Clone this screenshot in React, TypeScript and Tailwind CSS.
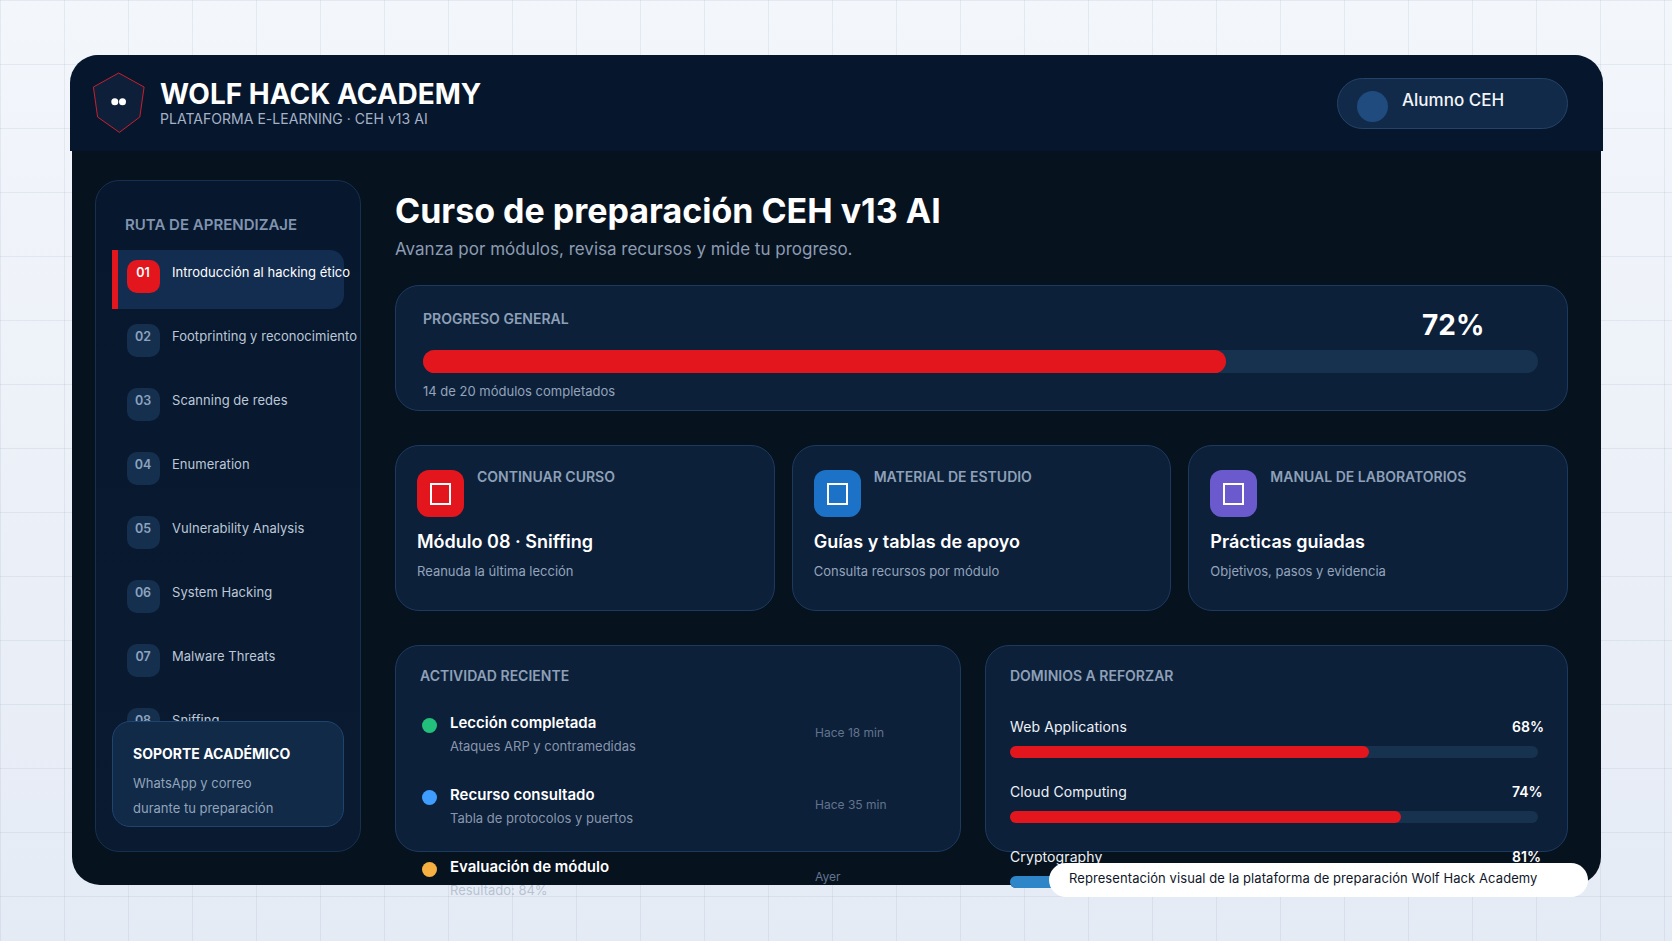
const nav = [
  ["01", "Introducción al hacking ético"],
  ["02", "Footprinting y reconocimiento"],
  ["03", "Scanning de redes"],
  ["04", "Enumeration"],
  ["05", "Vulnerability Analysis"],
  ["06", "System Hacking"],
  ["07", "Malware Threats"],
  ["08", "Sniffing"],
];

const cards = [
  { icon: "bg-[#e3161e]", label: "CONTINUAR CURSO", title: "Módulo 08 · Sniffing", sub: "Reanuda la última lección" },
  { icon: "bg-[#1c72c6]", label: "MATERIAL DE ESTUDIO", title: "Guías y tablas de apoyo", sub: "Consulta recursos por módulo" },
  { icon: "bg-[#6a5acd]", label: "MANUAL DE LABORATORIOS", title: "Prácticas guiadas", sub: "Objetivos, pasos y evidencia" },
];

const activity = [
  { dot: "bg-[#22c07a]", title: "Lección completada", sub: "Ataques ARP y contramedidas", time: "Hace 18 min" },
  { dot: "bg-[#3f9dff]", title: "Recurso consultado", sub: "Tabla de protocolos y puertos", time: "Hace 35 min" },
  { dot: "bg-[#f5b041]", title: "Evaluación de módulo", sub: "Resultado: 84%", time: "Ayer" },
];

const domains = [
  { name: "Web Applications", pct: 68, bar: "bg-[#e3161e]" },
  { name: "Cloud Computing", pct: 74, bar: "bg-[#e3161e]" },
  { name: "Cryptography", pct: 81, bar: "bg-[#2e86c9]" },
];

const grid =
  "bg-[linear-gradient(to_right,rgba(148,163,184,0.16)_1px,transparent_1px),linear-gradient(to_bottom,rgba(148,163,184,0.16)_1px,transparent_1px),linear-gradient(180deg,#f3f6fb,#e5ebf5)] bg-[size:64px_64px,64px_64px,100%_100%]";

export default function App() {
  return (
    <div className={`relative h-[941px] w-[1672px] overflow-hidden pl-[72px] pr-[71px] pt-[55px] font-['Inter',sans-serif] text-white ${grid}`}>
      <div className="h-[830px] rounded-[28px] bg-[#07121f]">
        <header className="-mx-[2px] flex h-[96px] items-center justify-between rounded-t-[28px] bg-[#06162d] pl-[23px] pr-[35px]">
          <div className="flex items-center gap-[15px]">
            <svg width="52" height="62" viewBox="0 0 52 62">
              <polygon points="25.2,0.5 50.6,14.5 46.3,44.5 25.9,59.9 4.1,44.5 -0.1,14.5" transform="translate(0.5 0.5)" fill="#0e2039" stroke="#c8202f" strokeWidth="1" />
              <circle cx="21.8" cy="29.8" r="3.5" fill="#fff" />
              <circle cx="29.5" cy="29.8" r="3.5" fill="#fff" />
            </svg>
            <div className="mt-[-2px]">
              <div className="text-[28px] font-bold leading-[32px]">WOLF HACK ACADEMY</div>
              <div className="mt-[1px] text-[14px] leading-[16px] tracking-[0.03px] text-[#a4b2c6]">PLATAFORMA E-LEARNING · CEH v13 AI</div>
            </div>
          </div>
          <div className="flex h-[51px] w-[231px] items-start gap-[14px] rounded-[26px] border border-[#234468] bg-[#112a49] pl-[19px] pt-[12px]">
            <div className="h-[31px] w-[31px] rounded-full bg-[#1f4b7e]" />
            <span className="mt-[-3px] text-[17px] font-medium leading-[24px] text-[#f1f5f9]">Alumno CEH</span>
          </div>
        </header>

        <div className="flex gap-[34px] pl-[23px] pr-[33px] pt-[29px]">
          <aside className="relative h-[672px] w-[266px] shrink-0 overflow-hidden rounded-[24px] border border-[#16304f] bg-[linear-gradient(180deg,#07172e,#0a1a30)] pl-[16px] pt-[34px]">
            <div className="pl-[13px] text-[15px] font-semibold leading-[20px] text-[#8094ae]">RUTA DE APRENDIZAJE</div>
            <div className="mt-[15px] flex flex-col gap-[5px]">
              {nav.map(([n, t], i) => (
                <div key={n} className={`flex h-[59px] w-[232px] gap-[12px] pt-[10px] ${i === 0 ? "rounded-r-[14px] border-l-[6px] border-[#e3161e] bg-[#132d50] pl-[9px]" : "pl-[15px]"}`}>
                  <div className={`flex h-[33px] w-[33px] shrink-0 justify-center rounded-[10px] pr-[1px] pt-[3px] text-[12.5px] font-semibold leading-[20px] ${i === 0 ? "bg-[#e3161e] text-white" : "bg-[#15304f] text-[#8ea3bf]"}`}>{n}</div>
                  <div className={`mt-[2px] whitespace-nowrap text-[13px] leading-[20px] tracking-[0.04px] ${i === 0 ? "text-white" : "text-[#bcc8d8]"}`}>{t}</div>
                </div>
              ))}
            </div>
            <div className="absolute left-[16px] top-[540px] h-[106px] w-[232px] rounded-[18px] border border-[#1e4570] bg-[#102a47] pl-[20px] pt-[22px]">
              <div className="text-[14px] font-bold leading-[20px] text-white">SOPORTE ACADÉMICO</div>
              <div className="mt-[7px] text-[13px] leading-[25px] text-[#93a4bb]">WhatsApp y correo<br />durante tu preparación</div>
            </div>
          </aside>

          <main className="min-w-0 flex-1 pt-[9px]">
            <h1 className="text-[34px] font-bold leading-[44px]">Curso de preparación CEH v13 AI</h1>
            <p className="mt-[3px] text-[17px] leading-[26px] text-[#8c9cb2]">Avanza por módulos, revisa recursos y mide tu progreso.</p>

            <section className="relative mt-[23px] h-[126px] rounded-[24px] border border-[#1c3a5e] bg-[#0d203a] pl-[27px] pr-[29px] pt-[23px]">
              <div className="text-[14px] font-semibold leading-[20px] text-[#8ea0b8]">PROGRESO GENERAL</div>
              <div className="absolute left-[1026px] top-[19px] text-[28px] font-bold leading-[40px]">72%</div>
              <div className="mt-[21px] h-[23px] rounded-full bg-[#17324f]">
                <div className="h-full w-[72%] rounded-full bg-[#e3161e]" />
              </div>
              <div className="mt-[8px] text-[13px] leading-[20px] text-[#93a4bb]">14 de 20 módulos completados</div>
            </section>

            <section className="mt-[34px] grid grid-cols-3 gap-[17px]">
              {cards.map((c) => (
                <div key={c.label} className="h-[166px] rounded-[24px] border border-[#1c3a5e] bg-[#0d203a] px-[21px] pt-[24px]">
                  <div className="flex gap-[13px]">
                    <div className={`flex h-[47px] w-[47px] items-center justify-center rounded-[12px] ${c.icon}`}>
                      <div className="h-[22px] w-[21px] border-2 border-white" />
                    </div>
                    <div className="mt-[-3px] text-[14px] font-semibold leading-[20px] text-[#8ea0b8]">{c.label}</div>
                  </div>
                  <div className="mt-[11px] text-[18px] font-semibold leading-[28px]">{c.title}</div>
                  <div className="mt-[5px] text-[13px] leading-[20px] text-[#93a4bb]">{c.sub}</div>
                </div>
              ))}
            </section>

            <section className="mt-[34px] flex gap-[24px]">
              <div className="h-[207px] w-[566px] rounded-[24px] border border-[#1c3a5e] bg-[#0d203a] pl-[24px] pt-[20px]">
                <div className="text-[14px] font-semibold leading-[20px] text-[#8ea0b8]">ACTIVIDAD RECIENTE</div>
                <div className="mt-[25px] flex flex-col gap-[12px]">
                  {activity.map((a) => (
                    <div key={a.title} className="flex h-[60px] items-start">
                      <div className={`ml-[2px] mt-[7px] h-[15px] w-[15px] rounded-full ${a.dot}`} />
                      <div className="ml-[13px] w-[365px]">
                        <div className="text-[15px] font-semibold leading-[24px]">{a.title}</div>
                        <div className="mt-[-1px] text-[13px] leading-[24px] text-[rgba(170,183,202,0.8)]">{a.sub}</div>
                      </div>
                      <div className="mt-[12px] text-[12px] leading-[20px] text-[#62748e]">{a.time}</div>
                    </div>
                  ))}
                </div>
              </div>
              <div className="h-[207px] flex-1 rounded-[24px] border border-[#1c3a5e] bg-[#0d203a] pl-[24px] pt-[20px]">
                <div className="text-[14px] font-semibold leading-[20px] text-[#8ea0b8]">DOMINIOS A REFORZAR</div>
                <div className="mt-[29px] flex flex-col gap-[17px]">
                  {domains.map((d) => (
                    <div key={d.name} className="h-[48px] w-[534px]">
                      <div className="flex justify-between text-[14px] leading-[24px]">
                        <span className="tracking-[0.1px] text-[#edf2f7]">{d.name}</span>
                        <span className="w-[32px] whitespace-nowrap font-semibold">{d.pct}%</span>
                      </div>
                      <div className="mt-[7px] h-[12px] w-[528px] rounded-full bg-[#17324f]">
                        <div className={`h-full rounded-full ${d.bar}`} style={{ width: `${d.pct}%` }} />
                      </div>
                    </div>
                  ))}
                </div>
              </div>
            </section>
          </main>
        </div>
      </div>
      <div className="absolute left-[1049px] top-[863px] flex h-[34px] w-[539px] items-center rounded-[17px] bg-white pb-[3px] pl-[20px] text-[13px] tracking-[0.08px] text-[#0f172a]">
        Representación visual de la plataforma de preparación Wolf Hack Academy
      </div>
    </div>
  );
}
